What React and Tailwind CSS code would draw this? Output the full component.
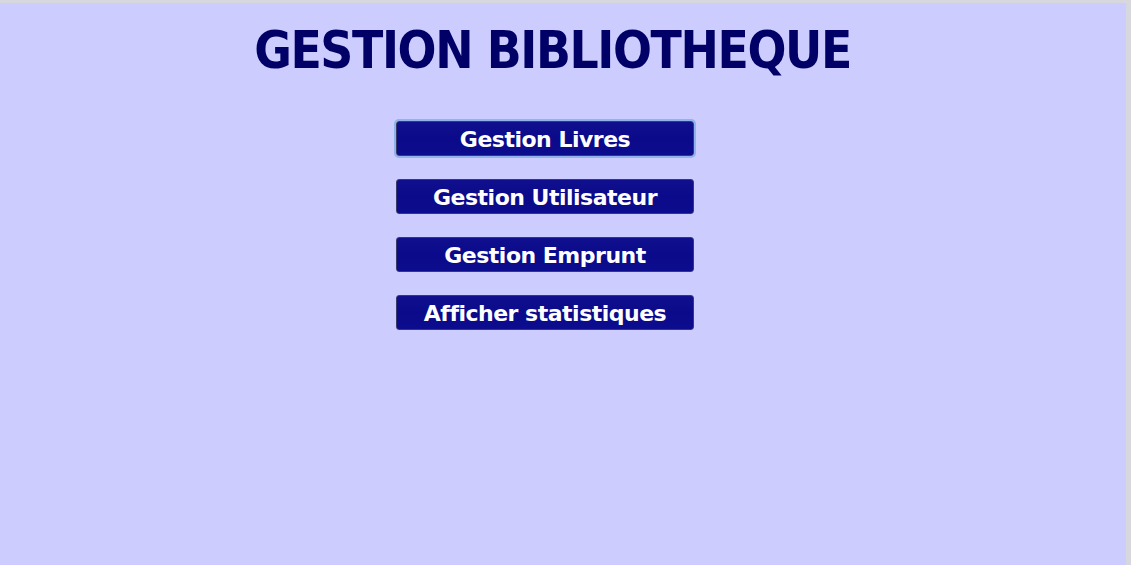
import React from 'react';

const menuItems = ['Gestion Livres', 'Gestion Utilisateur', 'Gestion Emprunt', 'Afficher statistiques'];

const App = () => {
  return (
    <div className="w-[1131px] h-[565px] bg-[#d6d8de] pt-[3px] pr-[5px] overflow-hidden">
      <div className="h-full bg-[#ccccff] pt-[20px]" style={{ fontFamily: '"DejaVu Sans", sans-serif' }}>
        <h1
          className="w-[1105px] text-center text-[51px] leading-[56px] font-bold text-[#000066] tracking-[-1.4px]"
          style={{ fontFamily: '"DejaVu Sans Condensed", "DejaVu Sans", sans-serif' }}
        >
          GESTION BIBLIOTHEQUE
        </h1>

        <div className="ml-[396px] mt-[42px] w-[298px] flex flex-col gap-[23px]">
          {menuItems.map((label, i) => (
            <button
              key={label}
              className={
                'h-[35px] w-full rounded-[3px] border border-[#3a3a6a] bg-gradient-to-b from-[#10108f] via-[#0a0a8a] to-[#0c0c8e] text-white text-[22px] font-bold tracking-[-0.5px] leading-none pt-[2px] ' +
                (i === 0 ? 'ring-2 ring-[#8fb3ea]' : '')
              }
            >
              {label}
            </button>
          ))}
        </div>
      </div>
    </div>
  );
};

export default App;
